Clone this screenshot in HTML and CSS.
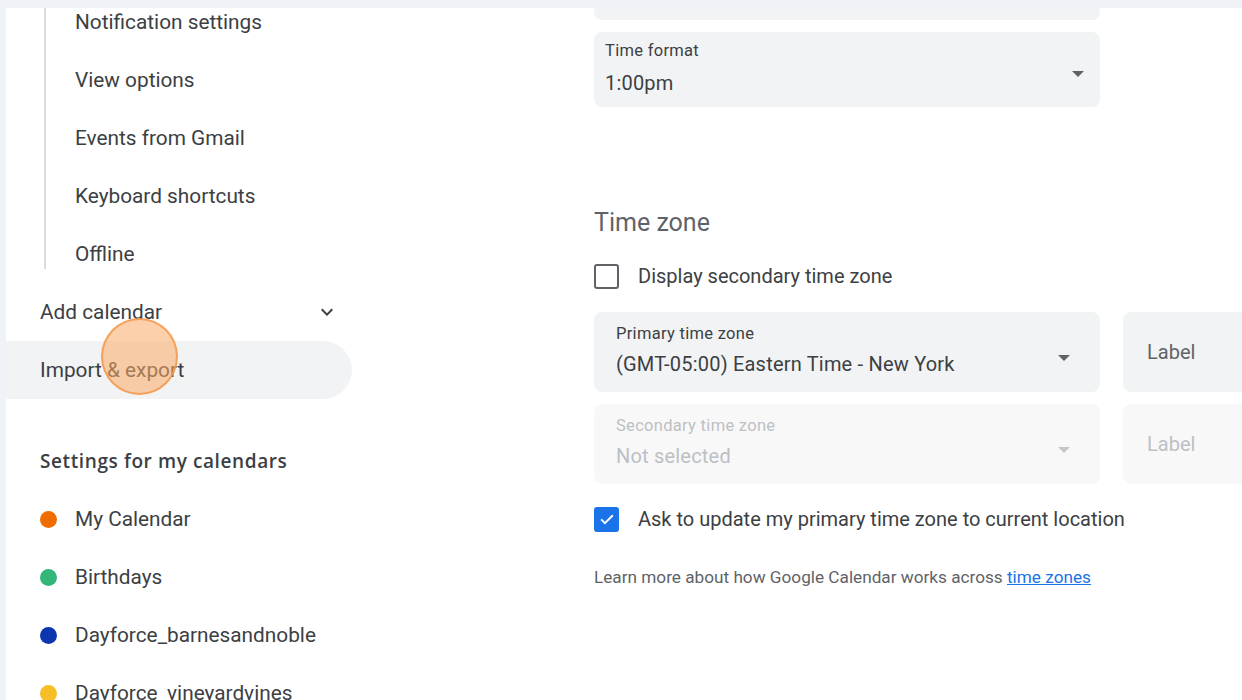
FILE: index.html
```html
<!DOCTYPE html>
<html lang="en">
<head>
<meta charset="utf-8">
<title>Settings</title>
<link rel="stylesheet" href="styles.css">
</head>
<body>
<div class="page">
  <div class="sheet">
    <aside class="sidebar">
      <ul class="sub-list">
        <li class="sub-item">Notification settings</li>
        <li class="sub-item">View options</li>
        <li class="sub-item">Events from Gmail</li>
        <li class="sub-item">Keyboard shortcuts</li>
        <li class="sub-item">Offline</li>
      </ul>
      <div class="nav-item">
        <span>Add calendar</span>
        <svg class="chevron" viewBox="0 0 24 24" width="24" height="24"><path d="M7.41 8.59 12 13.17l4.59-4.58L18 10l-6 6-6-6z" fill="#3c4043"/></svg>
      </div>
      <div class="nav-item active">
        <span>Import &amp; export</span>
        <span class="tap-ring"></span>
      </div>
      <div class="section-title">Settings for my calendars</div>
      <ul class="cal-list">
        <li class="cal-item"><span class="dot dot-orange"></span>My Calendar</li>
        <li class="cal-item"><span class="dot dot-green"></span>Birthdays</li>
        <li class="cal-item"><span class="dot dot-blue"></span>Dayforce_barnesandnoble</li>
        <li class="cal-item"><span class="dot dot-yellow"></span>Dayforce_vineyardvines</li>
      </ul>
    </aside>

    <main class="content">
      <div class="field field-prev"></div>
      <div class="field field-format">
        <div class="field-text">
          <span class="field-label">Time format</span>
          <span class="field-value">1:00pm</span>
        </div>
        <span class="caret"></span>
      </div>

      <h2 class="heading">Time zone</h2>

      <label class="check-row check-first">
        <span class="box"></span>
        <span>Display secondary time zone</span>
      </label>

      <div class="zone-row">
        <div class="field field-zone">
          <div class="field-text">
            <span class="field-label">Primary time zone</span>
            <span class="field-value">(GMT-05:00) Eastern Time - New York</span>
          </div>
          <span class="caret caret-zone"></span>
        </div>
        <div class="field field-tag"><span class="tag-text">Label</span></div>
      </div>

      <div class="zone-row zone-row-disabled">
        <div class="field field-zone">
          <div class="field-text">
            <span class="field-label">Secondary time zone</span>
            <span class="field-value">Not selected</span>
          </div>
          <span class="caret caret-zone"></span>
        </div>
        <div class="field field-tag"><span class="tag-text">Label</span></div>
      </div>

      <label class="check-row check-second">
        <span class="box box-checked">
          <svg viewBox="0 0 24 24" width="20" height="20"><path d="M5 12.5l4.5 4.5L19 7.5" fill="none" stroke="#fff" stroke-width="2.4"/></svg>
        </span>
        <span>Ask to update my primary time zone to current location</span>
      </label>

      <p class="learn">Learn more about how Google Calendar works across <a href="#" class="link">time zones</a></p>
    </main>
  </div>
</div>
</body>
</html>
```

FILE: styles.css
```css
* {
  box-sizing: border-box;
}

html, body {
  margin: 0;
  padding: 0;
}

body {
  font-family: Roboto, "Noto Sans", Arial, sans-serif;
  color: #3c4043;
  background: #eff2f7;
}

.page {
  width: 1242px;
  height: 700px;
  padding: 8px 0 0 6px;
  background: #eff2f7;
  overflow: hidden;
}

.sheet {
  display: flex;
  height: 692px;
  background: #ffffff;
  overflow: hidden;
}

/* ---------- sidebar ---------- */

.sidebar {
  flex: 0 0 346px;
  margin-top: -15px;
  font-size: 20.8px;
}

.sub-list {
  list-style: none;
  margin: 0 0 0 38px;
  padding: 0 0 0 29px;
  border-left: 2px solid #dadce0;
}

.sub-item {
  height: 58px;
  line-height: 58px;
  white-space: nowrap;
}

.sub-item:last-child {
  height: 44px;
}

.nav-item {
  position: relative;
  display: flex;
  align-items: center;
  justify-content: space-between;
  height: 58px;
  padding: 0 13px 0 34px;
}

.nav-item:first-of-type {
  margin-top: 14px;
}

.nav-item.active {
  background: #f1f3f4;
  border-radius: 0 29px 29px 0;
}

.chevron {
  display: block;
}

/* pointer highlight drawn over the hovered item */
.tap-ring {
  position: absolute;
  left: 95px;
  top: -23px;
  width: 77px;
  height: 77px;
  border-radius: 50%;
  background: rgba(250, 170, 100, 0.55);
  border: 2px solid rgba(244, 150, 70, 0.8);
}

.section-title {
  height: 58px;
  line-height: 58px;
  margin-top: 33px;
  padding-left: 34px;
  font-family: "Open Sans", Roboto, sans-serif;
  font-weight: 600;
  font-size: 19px;
  letter-spacing: 0.6px;
}

.cal-list {
  list-style: none;
  margin: 0;
  padding: 0 0 0 34px;
}

.cal-item {
  display: flex;
  align-items: center;
  height: 58px;
  white-space: nowrap;
}

.dot {
  width: 17px;
  height: 17px;
  border-radius: 50%;
  margin-right: 18px;
}

.dot-orange { background: #ef6c00; }
.dot-green { background: #33b679; }
.dot-blue { background: #0b36b0; }
.dot-yellow { background: #f6bf26; }

/* ---------- content ---------- */

.content {
  flex: 1 1 auto;
  padding-left: 242px;
  min-width: 0;
}

.field {
  display: flex;
  align-items: flex-start;
  justify-content: space-between;
  background: #f1f3f4;
  border-radius: 8px;
}

.field-prev {
  width: 506px;
  height: 75px;
  margin-top: -63px;
}

.field-format {
  width: 506px;
  height: 75px;
  margin-top: 12px;
  padding: 9px 16px 0 11px;
}

.field-text {
  display: flex;
  flex-direction: column;
}

.field-label {
  font-size: 16.5px;
  line-height: 20px;
  letter-spacing: 0.3px;
}

.field-value {
  font-size: 20px;
  line-height: 26px;
  letter-spacing: 0.2px;
  margin-top: 9px;
}

.caret {
  align-self: center;
  width: 0;
  height: 0;
  border-left: 6px solid transparent;
  border-right: 6px solid transparent;
  border-top: 6px solid #5f6368;
}

.caret-zone {
  margin-right: 2px;
}

.heading {
  margin: 101px 0 0;
  font-size: 25px;
  font-weight: 400;
  line-height: 30px;
  color: #5f6368;
}

.check-row {
  display: flex;
  align-items: center;
  gap: 19px;
  height: 26px;
  font-size: 20px;
}

.check-first {
  margin-top: 25px;
}

.box {
  flex: 0 0 25px;
  width: 25px;
  height: 25px;
  border: 2px solid #5f6368;
  border-radius: 3px;
  display: flex;
  align-items: center;
  justify-content: center;
}

.box-checked {
  background: #1a73e8;
  border-color: #1a73e8;
}

.zone-row {
  display: flex;
  gap: 23px;
  margin-top: 23px;
}

.zone-row + .zone-row {
  margin-top: 12px;
}

.field-zone {
  flex: 0 0 506px;
  height: 80px;
  padding: 12px 28px 0 22px;
}

.field-zone .field-value {
  margin-top: 7px;
}

.field-tag {
  flex: 0 0 200px;
  height: 80px;
  padding-left: 24px;
  align-items: center;
}

.tag-text {
  font-size: 20px;
  color: #5f6368;
}

.zone-row-disabled .field {
  background: #f8f8f9;
}

.zone-row-disabled .field-label,
.zone-row-disabled .field-value,
.zone-row-disabled .tag-text {
  color: #bcc0c4;
}

.zone-row-disabled .caret {
  border-top-color: #c4c7ca;
}

.check-second {
  margin-top: 22px;
}

.learn {
  margin: 35px 0 0;
  font-size: 17.2px;
  color: #5f6368;
}

.link {
  color: #1a73e8;
  text-decoration: underline;
}
```
